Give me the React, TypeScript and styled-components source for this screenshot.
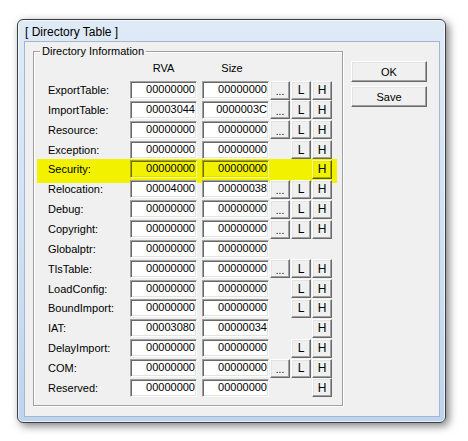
import React from 'react';
import styled, { createGlobalStyle, css } from 'styled-components';

const GlobalStyle = createGlobalStyle`
  html, body {
    margin: 0;
    padding: 0;
    background: #ffffff;
  }
  body {
    font-family: "Liberation Sans", Arial, sans-serif;
    font-size: 11px;
    color: #000;
  }
`;

const Stage = styled.div`
  width: 468px;
  height: 441px;
  box-sizing: border-box;
  padding: 19px 0 0 17px;
`;

// Win7 basic style dialog frame
const Window = styled.div`
  width: 429px;
  height: 404px;
  box-sizing: border-box;
  display: flex;
  flex-direction: column;
  padding: 0 5px 5px 6px;
  border: 1px solid #3b3f45;
  border-radius: 6px;
  background: linear-gradient(180deg, #dfeaf7 0%, #d3e3f4 45%, #bed4ec 100%);
  box-shadow: inset 0 0 0 1px rgba(255, 255, 255, 0.65), 3px 3px 9px rgba(0, 0, 0, 0.5);
`;

const TitleBar = styled.div`
  height: 21px;
  display: flex;
  align-items: center;
  padding: 2px 0 0 1px;
  box-sizing: border-box;
  font-size: 12px;
  color: #000;
`;

const Client = styled.div`
  flex: 1;
  display: flex;
  align-items: flex-start;
  box-sizing: border-box;
  padding: 9px 0 0 8px;
  background: #f0f0f0;
  border: 1px solid #a4b7cf;
`;

// etched group box
const GroupBox = styled.div`
  position: relative;
  width: 310px;
  box-sizing: border-box;
  padding: 9px 9px 8px 14px;
  border: 1px solid #a0a0a0;
  box-shadow: 1px 1px 0 #fff, inset 1px 1px 0 #fff;
`;

const Caption = styled.span`
  position: absolute;
  top: -8px;
  left: 6px;
  padding: 0 2px;
  line-height: 14px;
  background: #f0f0f0;
`;

const HeaderRow = styled.div`
  display: flex;
  height: 14px;
  line-height: 14px;
  margin-bottom: 6px;
  padding-left: 82px;
  gap: 5px;
`;

const HeaderCell = styled.div<{ $shift?: number }>`
  width: 67px;
  text-align: center;
  box-sizing: border-box;
  padding-right: ${p => p.$shift || 0}px;
`;

const Rows = styled.div`
  display: flex;
  flex-direction: column;
  gap: 1.87px;
`;

const Row = styled.div<{ $hl?: boolean }>`
  display: flex;
  align-items: center;
  height: 18px;
  ${p => p.$hl && css`
    background: #f2f200;
    margin: -1px -4px -5px -11px;
    padding: 1px 4px 5px 11px;
  `}
`;

const Label = styled.div`
  width: 82px;
  white-space: nowrap;
`;

const Field = styled.div<{ $hl?: boolean }>`
  width: 67px;
  height: 18px;
  box-sizing: border-box;
  padding-right: 1px;
  text-align: right;
  line-height: 14px;
  border: 1px solid;
  border-color: #a0a0a0 #fff #fff #a0a0a0;
  background: #fff;
  box-shadow: inset 1px 1px 0 #696969, inset -1px -1px 0 #e3e3e3;
  & + & {
    margin-left: 5px;
  }
  ${p => p.$hl && css`
    background: transparent;
    border-color: #a8a800 #fbfb80 #fbfb80 #a8a800;
    box-shadow: inset 1px 1px 0 #6e6e00, inset -1px -1px 0 #e0e000;
  `}
`;

const Buttons = styled.div`
  display: flex;
  gap: 1px;
  margin-left: 1px;
`;

const Slot = styled.div`
  width: 20px;
  height: 19px;
`;

const raised = css`
  box-sizing: border-box;
  border: 1px solid;
  border-color: #fff #696969 #696969 #fff;
  background: #f0f0f0;
  box-shadow: inset -1px -1px 0 #a0a0a0, inset 1px 1px 0 #e3e3e3;
  font-family: "Liberation Sans", Arial, sans-serif;
  color: #000;
  padding: 0;
  display: flex;
  align-items: center;
  justify-content: center;
`;

const SmallButton = styled.div<{ $hl?: boolean; $dots?: boolean }>`
  ${raised}
  width: 20px;
  height: 19px;
  font-size: ${p => (p.$dots ? '10px' : '12px')};
  padding-top: ${p => (p.$dots ? '3px' : '0')};
  ${p => p.$hl && css`
    background: #f2f200;
    border-color: #fbfb80 #5a5a00 #5a5a00 #fbfb80;
    box-shadow: inset -1px -1px 0 #a8a800, inset 1px 1px 0 #e8e800;
  `}
`;

const SideColumn = styled.div`
  display: flex;
  flex-direction: column;
  gap: 4px;
  margin: 10px 0 0 8px;
`;

const DialogButton = styled.div`
  ${raised}
  width: 76px;
  height: 21px;
  font-size: 11px;
`;

type Entry = {
  name: string;
  rva: string;
  size: string;
  btn: string; // which of "...", L, H are present
  hl?: boolean;
};

const entries: Entry[] = [
  { name: 'ExportTable:', rva: '00000000', size: '00000000', btn: 'DLH' },
  { name: 'ImportTable:', rva: '00003044', size: '0000003C', btn: 'DLH' },
  { name: 'Resource:', rva: '00000000', size: '00000000', btn: 'DLH' },
  { name: 'Exception:', rva: '00000000', size: '00000000', btn: 'LH' },
  { name: 'Security:', rva: '00000000', size: '00000000', btn: 'H', hl: true },
  { name: 'Relocation:', rva: '00004000', size: '00000038', btn: 'DLH' },
  { name: 'Debug:', rva: '00000000', size: '00000000', btn: 'DLH' },
  { name: 'Copyright:', rva: '00000000', size: '00000000', btn: 'DLH' },
  { name: 'Globalptr:', rva: '00000000', size: '00000000', btn: '' },
  { name: 'TlsTable:', rva: '00000000', size: '00000000', btn: 'DLH' },
  { name: 'LoadConfig:', rva: '00000000', size: '00000000', btn: 'LH' },
  { name: 'BoundImport:', rva: '00000000', size: '00000000', btn: 'LH' },
  { name: 'IAT:', rva: '00003080', size: '00000034', btn: 'H' },
  { name: 'DelayImport:', rva: '00000000', size: '00000000', btn: 'LH' },
  { name: 'COM:', rva: '00000000', size: '00000000', btn: 'DLH' },
  { name: 'Reserved:', rva: '00000000', size: '00000000', btn: 'H' },
];

const App: React.FC = () => {
  return (
    <Stage>
      <GlobalStyle />
      <Window>
        <TitleBar>[ Directory Table ]</TitleBar>
        <Client>
          <GroupBox>
            <Caption>Directory Information</Caption>
            <HeaderRow>
              <HeaderCell>RVA</HeaderCell>
              <HeaderCell $shift={7}>Size</HeaderCell>
            </HeaderRow>
            <Rows>
              {entries.map(e => (
                <Row key={e.name} $hl={e.hl}>
                  <Label>{e.name}</Label>
                  <Field $hl={e.hl}>{e.rva}</Field>
                  <Field $hl={e.hl}>{e.size}</Field>
                  <Buttons>
                    {e.btn.includes('D') ? <SmallButton $dots>...</SmallButton> : <Slot />}
                    {e.btn.includes('L') ? <SmallButton>L</SmallButton> : <Slot />}
                    {e.btn.includes('H') ? <SmallButton $hl={e.hl}>H</SmallButton> : <Slot />}
                  </Buttons>
                </Row>
              ))}
            </Rows>
          </GroupBox>
          <SideColumn>
            <DialogButton>OK</DialogButton>
            <DialogButton>Save</DialogButton>
          </SideColumn>
        </Client>
      </Window>
    </Stage>
  );
};

export default App;
